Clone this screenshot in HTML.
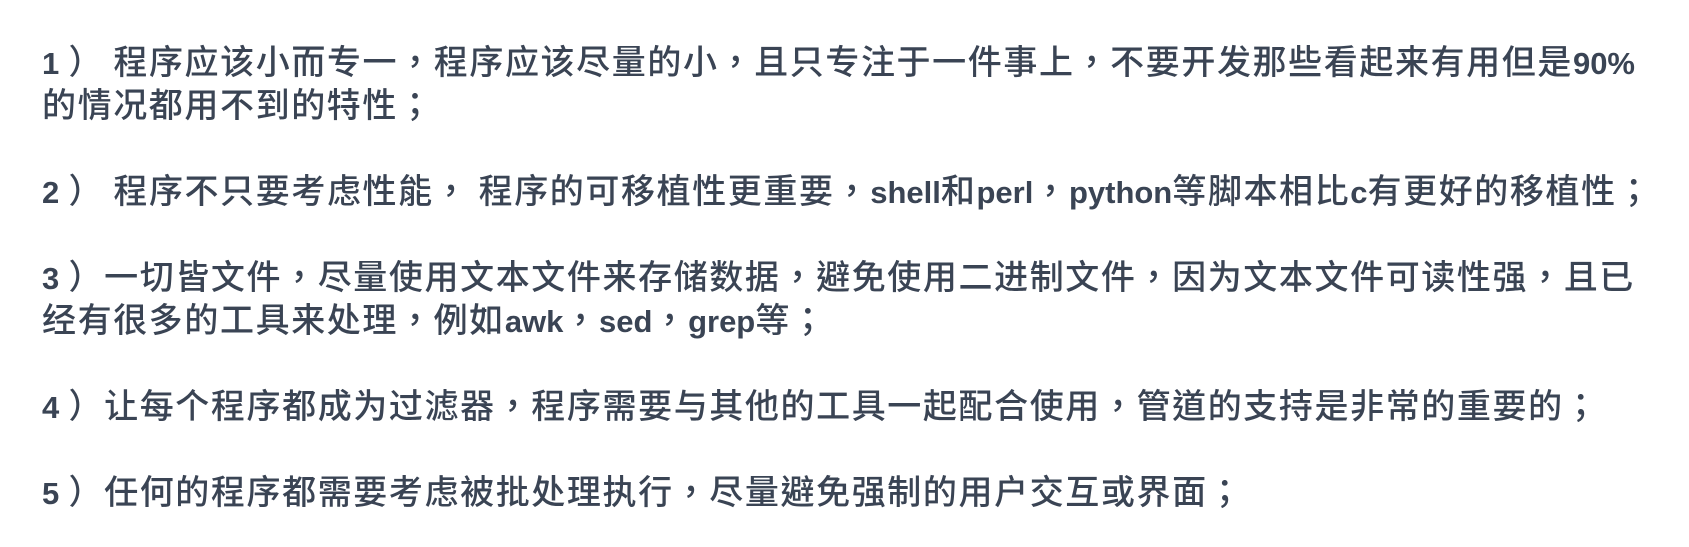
<!DOCTYPE html>
<html><head><meta charset="utf-8"><style>
html,body{margin:0;padding:0;background:#fff;width:1689px;height:547px;overflow:hidden}
.t{position:absolute;left:42px;top:38px;font-family:"Noto Sans CJK TC",sans-serif;font-size:34px;letter-spacing:1.6px;color:#3a4454;white-space:nowrap;font-weight:500}
.t div{height:43px;line-height:43px}
b{font-family:"Liberation Sans",sans-serif;font-weight:bold;letter-spacing:0;font-size:31px;line-height:0}
</style></head><body><div class="t">
<div><b>1</b>&nbsp;）&nbsp;程序应该小而专一，程序应该尽量的小，且只专注于一件事上，不要开发那些看起来有用但是<b>90%</b></div>
<div>的情况都用不到的特性；</div><div></div>
<div><b>2</b>&nbsp;）&nbsp;程序不只要考虑性能，&nbsp;程序的可移植性更重要，<b>shell</b>和<b>perl</b>，<b>python</b>等脚本相比<b>c</b>有更好的移植性；</div><div></div>
<div><b>3</b>&nbsp;）一切皆文件，尽量使用文本文件来存储数据，避免使用二进制文件，因为文本文件可读性强，且已</div>
<div>经有很多的工具来处理，例如<b>awk</b>，<b>sed</b>，<b>grep</b>等；</div><div></div>
<div><b>4</b>&nbsp;）让每个程序都成为过滤器，程序需要与其他的工具一起配合使用，管道的支持是非常的重要的；</div><div></div>
<div><b>5</b>&nbsp;）任何的程序都需要考虑被批处理执行，尽量避免强制的用户交互或界面；</div>
</div></body></html>
